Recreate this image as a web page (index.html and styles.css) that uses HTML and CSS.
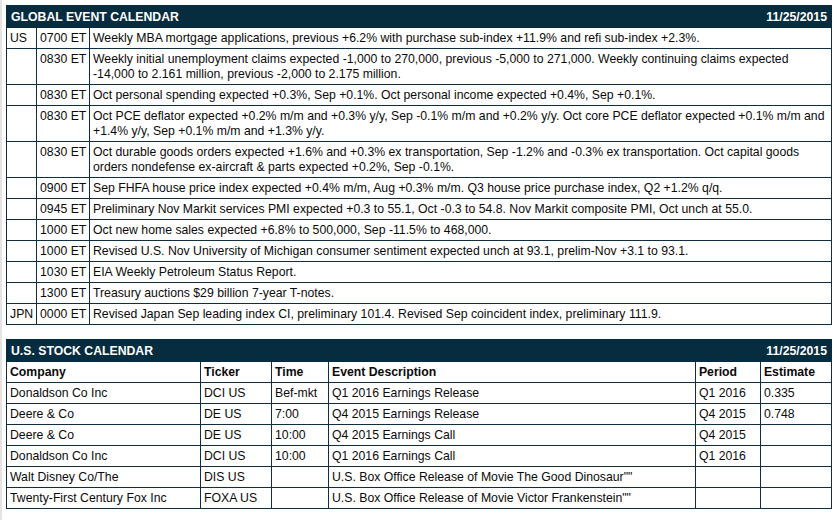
FILE: index.html
```html
<!DOCTYPE html>
<html>
<head>
<meta charset="utf-8">
<link rel="stylesheet" href="styles.css">
</head>
<body>
<div class="page">
<table class="cal global">
  <colgroup><col class="c-country"><col class="c-time"><col></colgroup>
  <tr class="head"><th colspan="3"><div class="bar"><span>GLOBAL EVENT CALENDAR</span><span>11/25/2015</span></div></th></tr>
  <tr><td class="nw">US</td><td class="nw">0700 ET</td><td>Weekly MBA mortgage applications, previous +6.2% with purchase sub-index +11.9% and refi sub-index +2.3%.</td></tr>
  <tr><td class="nw"></td><td class="nw">0830 ET</td><td>Weekly initial unemployment claims expected -1,000 to 270,000, previous -5,000 to 271,000. Weekly continuing claims expected -14,000 to 2.161 million, previous -2,000 to 2.175 million.</td></tr>
  <tr><td class="nw"></td><td class="nw">0830 ET</td><td>Oct personal spending expected +0.3%, Sep +0.1%. Oct personal income expected +0.4%, Sep +0.1%.</td></tr>
  <tr><td class="nw"></td><td class="nw">0830 ET</td><td>Oct PCE deflator expected +0.2% m/m and +0.3% y/y, Sep -0.1% m/m and +0.2% y/y. Oct core PCE deflator expected +0.1% m/m and +1.4% y/y, Sep +0.1% m/m and +1.3% y/y.</td></tr>
  <tr><td class="nw"></td><td class="nw">0830 ET</td><td>Oct durable goods orders expected +1.6% and +0.3% ex transportation, Sep -1.2% and -0.3% ex transportation. Oct capital goods orders nondefense ex-aircraft &amp; parts expected +0.2%, Sep -0.1%.</td></tr>
  <tr><td class="nw"></td><td class="nw">0900 ET</td><td>Sep FHFA house price index expected +0.4% m/m, Aug +0.3% m/m. Q3 house price purchase index, Q2 +1.2% q/q.</td></tr>
  <tr><td class="nw"></td><td class="nw">0945 ET</td><td>Preliminary Nov Markit services PMI expected +0.3 to 55.1, Oct -0.3 to 54.8. Nov Markit composite PMI, Oct unch at 55.0.</td></tr>
  <tr><td class="nw"></td><td class="nw">1000 ET</td><td>Oct new home sales expected +6.8% to 500,000, Sep -11.5% to 468,000.</td></tr>
  <tr><td class="nw"></td><td class="nw">1000 ET</td><td>Revised U.S. Nov University of Michigan consumer sentiment expected unch at 93.1, prelim-Nov +3.1 to 93.1.</td></tr>
  <tr><td class="nw"></td><td class="nw">1030 ET</td><td>EIA Weekly Petroleum Status Report.</td></tr>
  <tr><td class="nw"></td><td class="nw">1300 ET</td><td>Treasury auctions $29 billion 7-year T-notes.</td></tr>
  <tr><td class="nw">JPN</td><td class="nw">0000 ET</td><td>Revised Japan Sep leading index CI, preliminary 101.4. Revised Sep coincident index, preliminary 111.9.</td></tr>
</table>

<table class="cal stock">
  <colgroup><col class="c-company"><col class="c-ticker"><col class="c-stime"><col><col class="c-period"><col class="c-est"></colgroup>
  <tr class="head"><th colspan="6"><div class="bar"><span>U.S. STOCK CALENDAR</span><span>11/25/2015</span></div></th></tr>
  <tr class="colhead"><td>Company</td><td>Ticker</td><td>Time</td><td>Event Description</td><td>Period</td><td>Estimate</td></tr>
  <tr><td>Donaldson Co Inc</td><td>DCI US</td><td>Bef-mkt</td><td>Q1 2016 Earnings Release</td><td>Q1 2016</td><td>0.335</td></tr>
  <tr><td>Deere &amp; Co</td><td>DE US</td><td>7:00</td><td>Q4 2015 Earnings Release</td><td>Q4 2015</td><td>0.748</td></tr>
  <tr><td>Deere &amp; Co</td><td>DE US</td><td>10:00</td><td>Q4 2015 Earnings Call</td><td>Q4 2015</td><td></td></tr>
  <tr><td>Donaldson Co Inc</td><td>DCI US</td><td>10:00</td><td>Q1 2016 Earnings Call</td><td>Q1 2016</td><td></td></tr>
  <tr><td>Walt Disney Co/The</td><td>DIS US</td><td></td><td>U.S. Box Office Release of Movie The Good Dinosaur""</td><td></td><td></td></tr>
  <tr><td>Twenty-First Century Fox Inc</td><td>FOXA US</td><td></td><td>U.S. Box Office Release of Movie Victor Frankenstein""</td><td></td><td></td></tr>
</table>
</div>
</body>
</html>
```

FILE: styles.css
```css
html, body {
  margin: 0;
  padding: 0;
  background: #ffffff;
}
body {
  border-left: 2px solid #e4e4e4;
  min-height: 520px;
  box-sizing: border-box;
  font-family: "Liberation Sans", Arial, sans-serif;
  font-size: 12.25px;
  color: #0a0a0a;
}
.page {
  padding: 5px 5px 0 4px;
}
.cal {
  width: 826px;
  border-collapse: collapse;
  table-layout: fixed;
  margin-bottom: 14px;
}
.cal td, .cal th {
  border: 1px solid #0f2e40;
  padding: 3px 3px 2px 3px;
  line-height: 15px;
  vertical-align: top;
  text-align: left;
  white-space: normal;
}
.cal td.nw {
  white-space: nowrap;
  padding: 3px 1px 2px 3px;
}
.stock td {
  white-space: nowrap;
  overflow: hidden;
}
.cal .head th {
  background: #062c40;
  color: #ffffff;
  font-weight: bold;
  padding: 4px 4px 3px 4px;
  border-color: #062c40;
}
.bar {
  display: flex;
  justify-content: space-between;
  line-height: 14px;
}
.c-country { width: 30px; }
.c-time { width: 53px; }
.c-company { width: 194px; }
.c-ticker { width: 71px; }
.c-stime { width: 57px; }
.c-period { width: 65px; }
.c-est { width: 71px; }
.colhead td {
  font-weight: bold;
}
```
